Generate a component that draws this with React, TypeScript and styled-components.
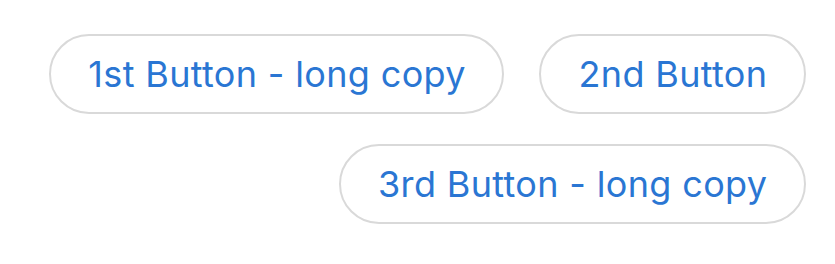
import React from "react";
import styled, { createGlobalStyle } from "styled-components";

const Global = createGlobalStyle`
  html, body { margin: 0; padding: 0; background: #ffffff; }
  body { font-family: Inter, "Liberation Sans", Arial, sans-serif; }
`;

const Wrap = styled.div`
  display: flex;
  flex-wrap: wrap;
  justify-content: flex-end;
  gap: 30px 35px;
  padding: 34px 29px 0 20px;
  width: 835px;
  box-sizing: border-box;
`;

const PillButton = styled.button`
  height: 80px;
  box-sizing: border-box;
  padding: 0 36.6px 0 37px;
  border: 2px solid #d9d9d9;
  border-radius: 40px;
  background: #ffffff;
  color: #2a76d3;
  font-family: Inter, "Liberation Sans", Arial, sans-serif;
  font-size: 36px;
  font-weight: 400;
  letter-spacing: 0.35px;
  line-height: 1;
  white-space: nowrap;
  cursor: pointer;
`;

export default function App() {
  return (
    <>
      <Global />
      <Wrap>
        <PillButton>1st Button - long copy</PillButton>
        <PillButton>2nd Button</PillButton>
        <PillButton>3rd Button - long copy</PillButton>
      </Wrap>
    </>
  );
}
